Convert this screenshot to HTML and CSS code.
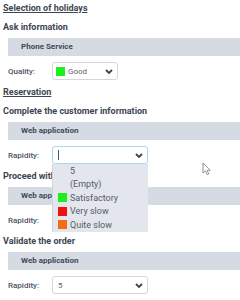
FILE: index.html
```html
<!DOCTYPE html>
<html lang="en">
<head>
    <meta charset="UTF-8">
    <meta name="viewport" content="width=device-width, initial-scale=1.0">
    <title>Selection of holidays</title>
    <link rel="stylesheet" href="styles.css">
</head>
<body>
    <div id="app">
        <a class="section-link" href="#">Selection of holidays</a>
        <div class="step">
            <h2>Ask information</h2>
            <div class="panel-title">Phone Service</div>
            <div class="field">
                <label>Quality:</label>
                <div class="select select-short">
                    <span class="swatch green"></span>
                    <span class="value">Good</span>
                    <svg class="chevron" viewBox="0 0 8 5"><polyline points="1,1 4,4 7,1"/></svg>
                </div>
            </div>
        </div>

        <a class="section-link" href="#">Reservation</a>
        <div class="step">
            <h2>Complete the customer information</h2>
            <div class="panel-title">Web application</div>
            <div class="field">
                <label>Rapidity:</label>
                <div class="combo">
                    <div class="select focused">
                        <span class="caret"></span>
                        <svg class="chevron" viewBox="0 0 8 5"><polyline points="1,1 4,4 7,1"/></svg>
                    </div>
                    <!-- liste ouverte -->
                    <ul class="options">
                        <li>5</li>
                        <li>(Empty)</li>
                        <li><span class="swatch green"></span>Satisfactory</li>
                        <li><span class="swatch red"></span>Very slow</li>
                        <li><span class="swatch orange"></span>Quite slow</li>
                    </ul>
                </div>
            </div>
        </div>

        <div class="step">
            <h2>Proceed with payment</h2>
            <div class="panel-title">Web application</div>
            <div class="field">
                <label>Rapidity:</label>
                <div class="select">
                    <span class="value">5</span>
                    <svg class="chevron" viewBox="0 0 8 5"><polyline points="1,1 4,4 7,1"/></svg>
                </div>
            </div>
        </div>

        <div class="step">
            <h2>Validate the order</h2>
            <div class="panel-title">Web application</div>
            <div class="field">
                <label>Rapidity:</label>
                <div class="select">
                    <span class="value">5</span>
                    <svg class="chevron" viewBox="0 0 8 5"><polyline points="1,1 4,4 7,1"/></svg>
                </div>
            </div>
        </div>
    </div>

    <svg class="pointer" viewBox="0 0 9 14" width="9" height="14">
        <path d="M1 1 L1 11 L3.5 8.8 L5.2 12.6 L6.8 11.9 L5.2 8.3 L8.3 8.2 Z"/>
    </svg>
</body>
</html>
```

FILE: styles.css
```css
/* base */
body {
    font-family: Roboto, "Liberation Sans", sans-serif;
    margin: 0;
    padding: 0;
    background: #fff;
    color: #3c4651;
}

#app {
    display: flex;
    flex-direction: column;
    align-items: flex-start;
    padding-left: 3px;
}

.section-link {
    display: block;
    font-size: 9px;
    font-weight: bold;
    line-height: 16px;
    color: #3c4651;
    text-decoration: underline;
    margin-bottom: 3px;
}

.step {
    align-self: stretch;
    margin-bottom: 4px;
}

.step h2 {
    font-size: 9px;
    font-weight: bold;
    line-height: 16px;
    margin: 0 0 3px 0;
}

.panel-title {
    margin-left: 5px;
    height: 18px;
    line-height: 18px;
    padding-left: 13px;
    background: #d6dae2;
    font-size: 8px;
    font-weight: bold;
    color: #3f4a57;
}

.field {
    display: flex;
    align-items: center;
    margin-top: 6px;
    padding-left: 5px;
}

.field label {
    width: 44px;
    font-size: 8px;
    font-weight: 500;
    color: #4a5461;
}

.select {
    display: flex;
    align-items: center;
    box-sizing: border-box;
    width: 96px;
    height: 18px;
    padding: 0 4px 0 5px;
    border: 1px solid #d3d6db;
    border-radius: 3px;
    background: #fff;
    font-size: 8px;
    color: #5a636d;
}

.select-short {
    width: 66px;
    padding-left: 3px;
}

.select .value {
    flex: 1;
}

.select.focused {
    border-color: #a9d6f2;
}

.caret {
    flex: 1;
    height: 10px;
    margin-left: 0;
    background: linear-gradient(#555, #555) left center / 1px 10px no-repeat;
}

.chevron {
    width: 8px;
    height: 5px;
    margin-left: auto;
    fill: none;
    stroke: #3a4450;
    stroke-width: 1.8;
}

.swatch {
    display: inline-block;
    width: 9px;
    height: 9px;
    margin-right: 3px;
    flex-shrink: 0;
}

.green { background: #1cf01c; }
.red { background: #ee1111; }
.orange { background: #f46c12; }

.combo {
    position: relative;
}

.options {
    position: absolute;
    top: 18px;
    left: 0;
    width: 96px;
    box-sizing: border-box;
    margin: 0;
    padding: 0 0 0 5px;
    list-style: none;
    background: #e3e6ec;
    border-left: 1px solid #d0d4db;
    z-index: 2;
}

.options li {
    display: flex;
    align-items: center;
    height: 13.5px;
    font-size: 9px;
    color: #555d66;
    padding-left: 12px;
}

.options li .swatch {
    margin-left: -12px;
}

.pointer {
    position: absolute;
    left: 202px;
    top: 162px;
    fill: #fff;
    stroke: #777;
    stroke-width: 0.8;
}
```
